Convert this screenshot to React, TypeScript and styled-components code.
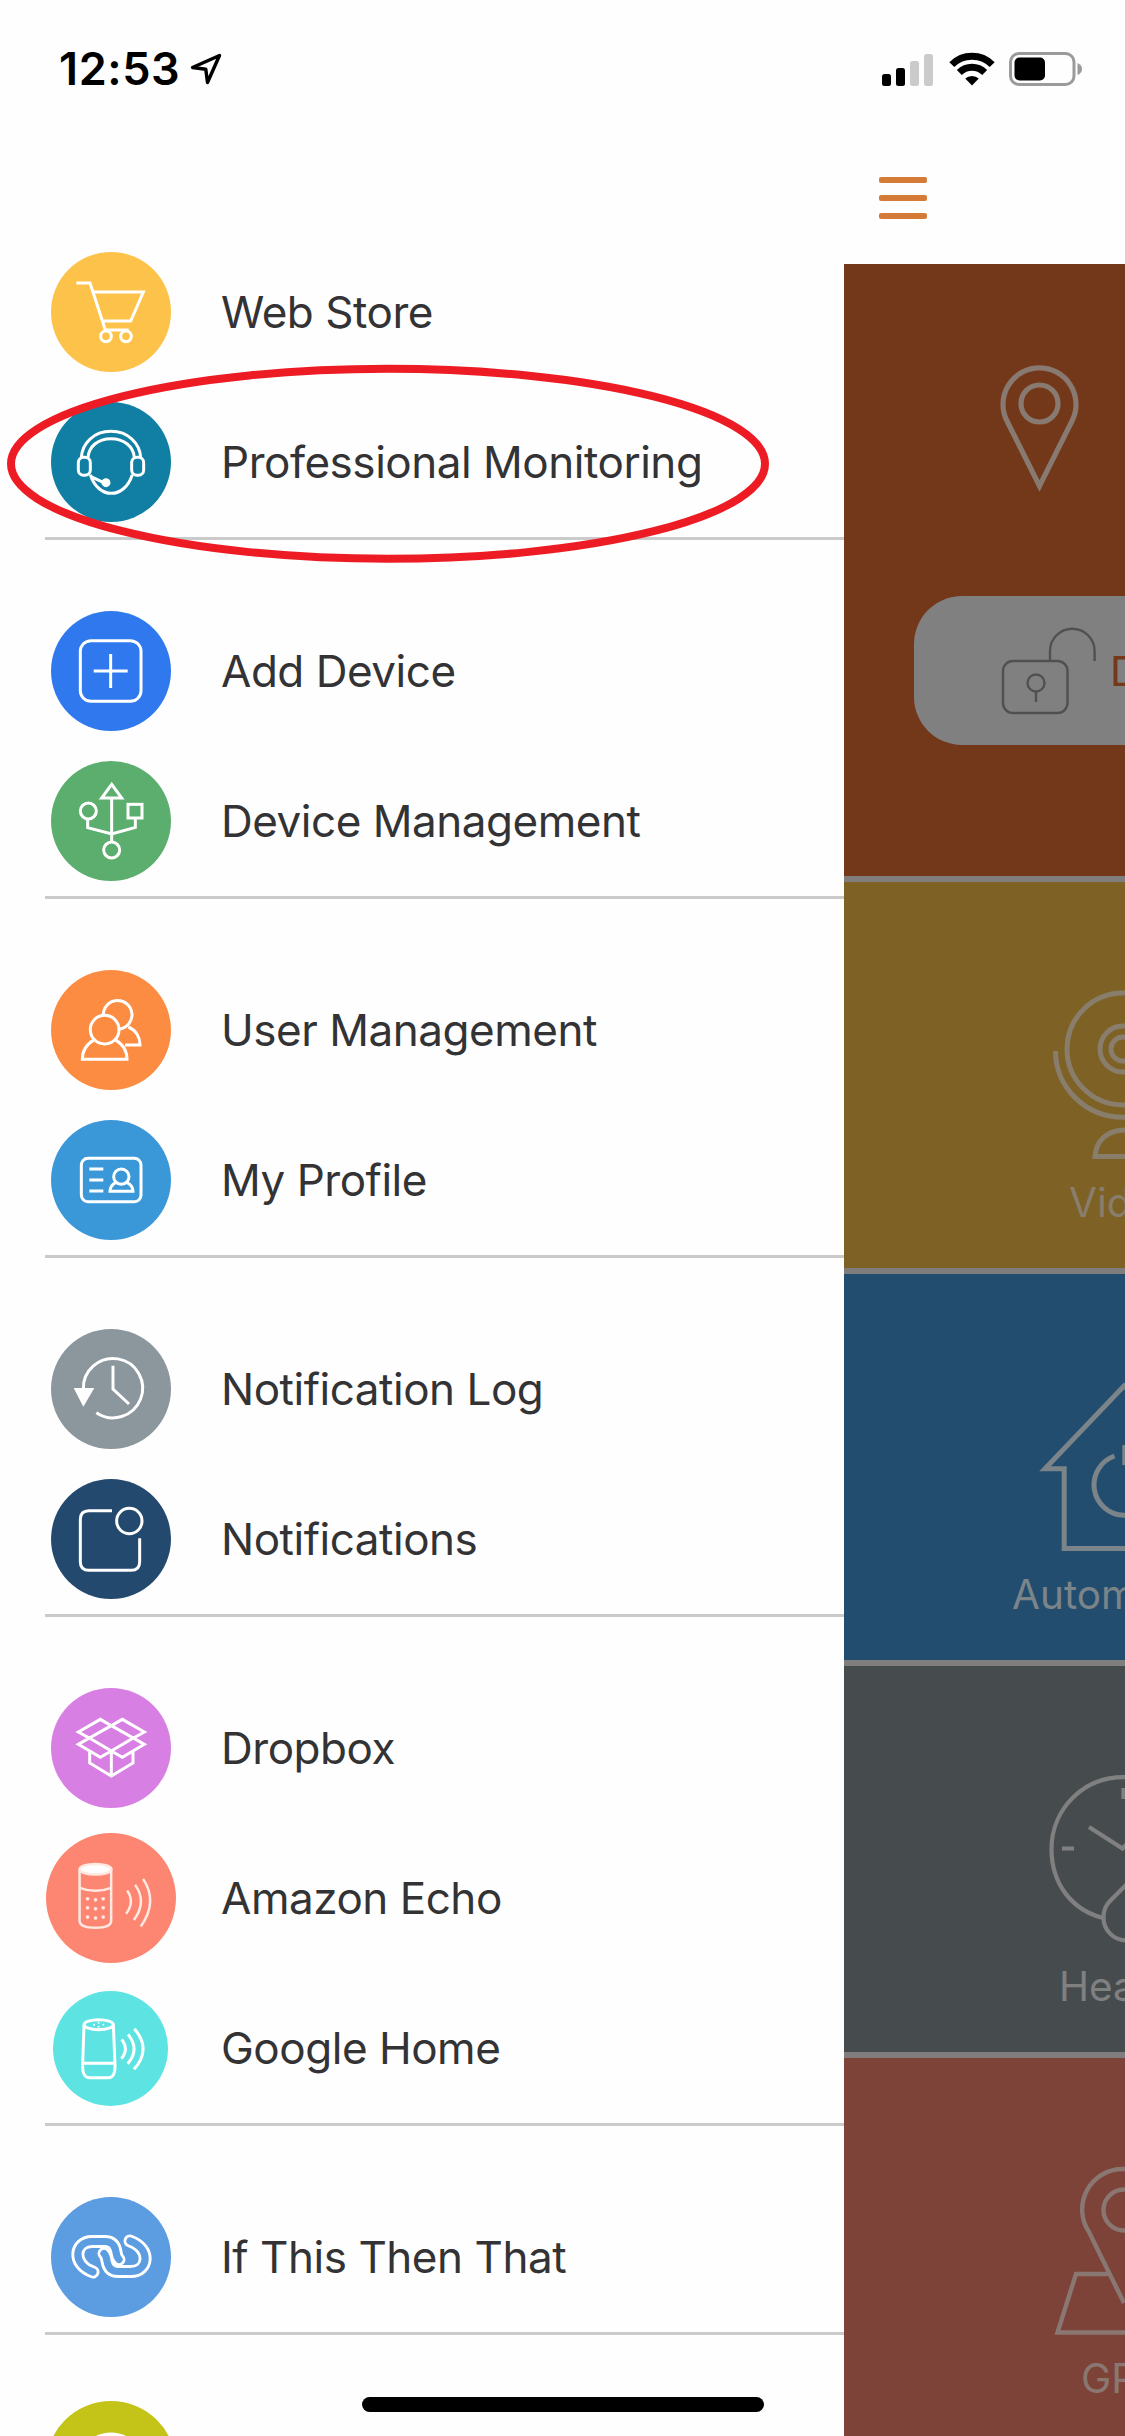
import React from "react";
import styled, { createGlobalStyle } from "styled-components";

const GlobalStyle = createGlobalStyle`
  html, body { margin: 0; padding: 0; background: #fff; }
  * { box-sizing: border-box; }
  svg { display: block; flex: none; }
`;

const Screen = styled.div`
  position: relative;
  width: 1125px;
  height: 2436px;
  overflow: hidden;
  display: flex;
  flex-direction: column;
  background: #fefefe;
  font-family: Inter, Roboto, "Liberation Sans", sans-serif;
`;

const StatusBar = styled.header`
  flex: none;
  height: 138px;
  padding: 0 43px 0 59px;
  display: flex;
  justify-content: space-between;
`;

const StatusGroup = styled.div<{ $gap: number }>`
  display: flex;
  align-items: center;
  height: 138px;
  gap: ${(p) => p.$gap}px;
`;

const Clock = styled.span`
  width: 121px;
  font-size: 45px;
  font-weight: 600;
  letter-spacing: 0.6px;
  line-height: 138px;
  white-space: nowrap;
  color: #000;
`;

const Body = styled.div`
  flex: 1;
  min-height: 0;
  display: flex;
`;

const Drawer = styled.nav`
  flex: none;
  width: 844px;
  padding: 99px 0 0 45px;
  display: flex;
  flex-direction: column;
  gap: 56px;
`;

const Group = styled.section`
  flex: none;
  border-bottom: 3px solid #cacaca;
`;

const Row = styled.div`
  height: 150px;
  display: flex;
  align-items: center;
`;

const IconSlot = styled.div`
  width: 131px;
  margin-right: 45px;
  display: flex;
  justify-content: center;
`;

const Disc = styled.div<{ $color: string; $size: number }>`
  flex: none;
  width: ${(p) => p.$size}px;
  height: ${(p) => p.$size}px;
  border-radius: 50%;
  background: ${(p) => p.$color};
  overflow: hidden;
`;

const Glyph = styled.svg`
  width: 100%;
  height: 100%;
  fill: none;
  stroke: #fff;
`;

const RowLabel = styled.span`
  font-size: 44px;
  letter-spacing: -0.47px;
  line-height: 60px;
  white-space: nowrap;
  color: #333335;
`;

const Content = styled.main`
  flex: none;
  width: 281px;
  display: flex;
  flex-direction: column;
`;

const TopBar = styled.div`
  flex: none;
  height: 126px;
  padding: 39px 0 0 35px;
`;

const Burger = styled.div`
  width: 48px;
  height: 42px;
  display: flex;
  flex-direction: column;
  justify-content: space-between;
`;

const BurgerLine = styled.span`
  height: 6px;
  border-radius: 2px;
  background: #d57b38;
`;

const Tiles = styled.div`
  flex: 1;
  display: flex;
  flex-direction: column;
  gap: 6px;
  background: #7f7e7d;
`;

const Tile = styled.div<{ $bg: string; $ink: string; $height: number }>`
  flex: none;
  height: ${(p) => p.$height}px;
  background: ${(p) => p.$bg};
  color: ${(p) => p.$ink};
  overflow: hidden;
`;

const TileArt = styled.svg`
  fill: none;
  stroke: currentColor;
`;

const TileLabel = styled.div<{ $indent: number }>`
  padding: 1px 0 0 ${(p) => p.$indent}px;
  font-size: 40.5px;
  line-height: 60px;
  white-space: nowrap;
`;

const ArmPill = styled.div`
  height: 149px;
  margin-left: 70px;
  border-radius: 48px 0 0 48px;
  background: #808080;
  display: flex;
  align-items: center;
  overflow: hidden;
`;

const ArmLabel = styled.span`
  font-size: 41px;
  color: #73391a;
`;

const Highlight = styled.svg`
  position: absolute;
  left: 0;
  top: 355px;
`;

const HomeIndicator = styled.div`
  position: absolute;
  left: 362px;
  top: 2397px;
  width: 402px;
  height: 15px;
  border-radius: 8px;
  background: #000;
`;

type Item = {
  label: string;
  color: string;
  size?: number;
  stroke?: number;
  box: string;
  art: React.ReactNode;
};

const groups: Item[][] = [
  [
    {
      label: "Web Store",
      color: "#fdc24a",
      box: "152 36 360 360",
      art: (
        <>
          <path d="M228 129H269L315 270H385M276 156H429L391 243H305" />
          <circle cx="317" cy="289" r="16" />
          <circle cx="377" cy="289" r="16" />
        </>
      ),
    },
    {
      label: "Professional Monitoring",
      color: "#117ea3",
      box: "152 486 360 360",
      art: (
        <>
          <path d="M243 652C246 610 280 574 332 574S418 610 421 652M263 652C266 620 292 596 332 596S399 620 402 652" />
          <rect x="234" y="652" width="36" height="54" rx="16" />
          <rect x="394" y="652" width="36" height="54" rx="16" />
          <path d="M270 704C282 740 306 760 333 760S384 740 396 704M272 710L310 728" />
          <circle cx="317" cy="728" r="9" fill="#fff" />
        </>
      ),
    },
  ],
  [
    {
      label: "Add Device",
      color: "#2f78ee",
      box: "151 63 360 360",
      art: (
        <>
          <rect x="239" y="152" width="182" height="182" rx="32" />
          <path d="M330 192V294M279 243H381" />
        </>
      ),
    },
    {
      label: "Device Management",
      color: "#5bae6e",
      box: "152 513 360 360",
      art: (
        <>
          <path d="M334 583L304 624H364ZM334 626V756M262 688V713L334 732L405 712V686" />
          <circle cx="264" cy="663" r="24" />
          <rect x="383" y="643" width="42" height="41" />
          <circle cx="334" cy="780" r="24" />
        </>
      ),
    },
  ],
  [
    {
      label: "User Management",
      color: "#fd8c43",
      box: "152 59 360 360",
      art: (
        <>
          <circle cx="313" cy="238" r="43" />
          <path d="M282 268C258 282 246 304 246 327H380C380 304 368 282 344 268" />
          <path d="M309 195A43 43 0 1 1 358 236M384 230C408 240 419 262 419 284H374" />
        </>
      ),
    },
    {
      label: "My Profile",
      color: "#3b98d8",
      box: "152 510 360 360",
      art: (
        <>
          <rect x="243" y="625" width="179" height="130" rx="20" />
          <path d="M267 657H309M267 690H309M267 723H309" />
          <circle cx="363" cy="680" r="23" />
          <path d="M347 697Q329 706 329 724H398Q398 706 379 697" />
        </>
      ),
    },
  ],
  [
    {
      label: "Notification Log",
      color: "#8b969d",
      box: "152 57 360 360",
      art: (
        <>
          <path d="M249 238A89 89 0 1 1 288 308M338 167V237L386 282" />
          <path d="M220 234H282L249 290Z" fill="#fff" stroke="none" />
        </>
      ),
    },
    {
      label: "Notifications",
      color: "#24496e",
      box: "152 506 360 360",
      art: (
        <>
          <path d="M335 601H266Q240 601 240 627V754Q240 780 266 780H392Q418 780 418 754V684" />
          <circle cx="387" cy="632" r="38" />
        </>
      ),
    },
  ],
  [
    {
      label: "Dropbox",
      color: "#d87fe3",
      box: "152 53 360 360",
      art: (
        <path d="M234 185L300 147L333 166L267 203ZM432 185L366 147L333 166L399 203ZM234 222L267 203L333 242L300 261ZM432 222L399 203L333 242L366 261ZM268 244V278L333 317L398 278V244M333 242V317" />
      ),
    },
    {
      label: "Amazon Echo",
      color: "#fd8672",
      size: 130,
      stroke: 7.5,
      box: "135 488 391 391",
      art: (
        <g stroke="#ffe9e2">
          <ellipse cx="284" cy="597" rx="48" ry="16" fill="#fff" />
          <path d="M236 597V752Q236 773 284 773Q331 773 331 752V597M236 653Q284 671 331 653" />
          <g fill="#ffe9e2" stroke="none">
            {[686, 713, 741].map((y) => (
              <g key={y}>
                <circle cx="260" cy={y} r="5.5" />
                <circle cx="284" cy={y + 3} r="5.5" />
                <circle cx="307" cy={y} r="5.5" />
              </g>
            ))}
          </g>
          <path d="M379 661Q403 695 376 731M403 644Q440 695 399 750M427 626Q473 695 420 769" />
        </g>
      ),
    },
    {
      label: "Google Home",
      color: "#5ce3e2",
      size: 115,
      box: "160 960 345 345",
      art: (
        <>
          <ellipse cx="297" cy="1061" rx="44" ry="15" />
          <path d="M253 1062L249 1180Q247 1220 270 1220H326Q348 1220 346 1180L341 1062M249 1177H346" />
          <g fill="#fff" stroke="none">
            <circle cx="283" cy="1061" r="3" />
            <circle cx="297" cy="1055" r="3" />
            <circle cx="297" cy="1067" r="3" />
            <circle cx="311" cy="1061" r="3" />
          </g>
          <path d="M366 1105Q389 1135 365 1163M385 1090Q422 1135 384 1178M404 1073Q457 1135 403 1195" />
        </>
      ),
    },
  ],
  [
    {
      label: "If This Then That",
      color: "#5c9ce0",
      box: "0 1 120 120",
      art: (
        <g strokeLinecap="round">
          {[
            "M42 76C20 68 24 45.500 41 45.500H54C61 45.500 64 50 65 56C65.500 60 66.500 62 68 63.500",
            "M79 45C101 53 97 75.500 80 75.500H67C60 75.500 57 71 56 65C55.500 61 54.500 59 53 57.500",
          ].map((d) => (
            <g key={d}>
              <path d={d} strokeWidth="13" />
              <path d={d} stroke="#5c9ce0" strokeWidth="7.2" />
            </g>
          ))}
        </g>
      ),
    },
  ],
  [
    {
      label: "",
      color: "#c4c317",
      size: 130,
      stroke: 5,
      box: "0 0 130 130",
      art: <circle cx="65" cy="66" r="32" />,
    },
  ],
];

const LocationArrow = () => (
  <svg width="32" height="32" viewBox="0 0 32 32" fill="none" stroke="#000" strokeWidth="3.4" strokeLinejoin="round">
    <path d="M29.500 2.500L17.500 29.500L15.800 16.200L2.500 14.500Z" />
  </svg>
);

const Signal = () => (
  <svg width="52" height="33" viewBox="0 0 52 33">
    <rect x="0" y="21" width="9" height="12" rx="2.5" />
    <rect x="14" y="15" width="9" height="18" rx="2.5" />
    <rect x="28" y="8" width="9" height="25" rx="2.5" fill="#cbcbcb" />
    <rect x="42" y="1" width="9" height="32" rx="2.5" fill="#cbcbcb" />
  </svg>
);

const Wifi = () => (
  <svg width="46" height="34" viewBox="0 0 46 34" fill="none" stroke="#000" strokeWidth="7">
    <path d="M2.8 12.6A28.5 28.5 0 0 1 43.2 12.6" />
    <path d="M10.3 20.6A18 18 0 0 1 35.7 20.6" />
    <path d="M23 33.5L16.2 26.6A10 10 0 0 1 29.8 26.6Z" fill="#000" stroke="none" />
  </svg>
);

const Battery = () => (
  <svg width="73" height="34" viewBox="0 0 73 34">
    <rect x="1.5" y="1.5" width="63.5" height="31" rx="8.5" fill="none" stroke="#9a9a9a" strokeWidth="3" />
    <rect x="5.5" y="5.5" width="30.5" height="23" rx="5" />
    <path d="M68.5 11Q73 13 73 17T68.5 23Z" fill="#9a9a9a" />
  </svg>
);

export default function App() {
  return (
    <>
      <GlobalStyle />
      <Screen>
        <StatusBar>
          <StatusGroup $gap={9.5}>
            <Clock>12:53</Clock>
            <LocationArrow />
          </StatusGroup>
          <StatusGroup $gap={14.5}>
            <Signal />
            <Wifi />
            <Battery />
          </StatusGroup>
        </StatusBar>
        <Body>
          <Drawer>
            {groups.map((items, i) => (
              <Group key={i}>
                {items.map((item) => (
                  <Row key={item.label}>
                    <IconSlot>
                      <Disc $color={item.color} $size={item.size ?? 120}>
                        <Glyph viewBox={item.box} strokeWidth={item.stroke ?? 9}>
                          {item.art}
                        </Glyph>
                      </Disc>
                    </IconSlot>
                    <RowLabel>{item.label}</RowLabel>
                  </Row>
                ))}
              </Group>
            ))}
          </Drawer>
          <Content>
            <TopBar>
              <Burger>
                <BurgerLine />
                <BurgerLine />
                <BurgerLine />
              </Burger>
            </TopBar>
            <Tiles>
              <Tile $bg="#733819" $ink="#887971" $height={612}>
                <TileArt width="281" height="332" viewBox="844 264 281 332" strokeWidth="5.2">
                  <path d="M1039.5 486L1007 421A36.500 36.500 0 1 1 1072 421Z" />
                  <circle cx="1039.5" cy="403.5" r="18.5" />
                </TileArt>
                <ArmPill>
                  <svg width="196" height="149" viewBox="914 596 196 149" fill="none" stroke="#505050" strokeWidth="2.4">
                    <rect x="1003" y="661" width="64.5" height="52" rx="10" />
                    <path d="M1050 661V651A22.300 22.300 0 0 1 1094.600 651V661" />
                    <circle cx="1036" cy="683" r="8.5" />
                    <path d="M1036 691.500V702" />
                  </svg>
                  <ArmLabel>D</ArmLabel>
                </ArmPill>
              </Tile>
              <Tile $bg="#7e6125" $ink="#897d6b" $height={386}>
                <TileArt width="281" height="290" viewBox="844 882 281 290" strokeWidth="5">
                  <circle cx="1123" cy="1049" r="56" />
                  <circle cx="1123" cy="1049" r="23" />
                  <circle cx="1123" cy="1049" r="12" />
                  <path d="M1055.500 1051A67.500 66.500 0 0 0 1123 1117.300H1125M1125 1156.500H1095C1096 1141 1107 1130 1125 1130" />
                </TileArt>
                <TileLabel $indent={225}>Vid</TileLabel>
              </Tile>
              <Tile $bg="#234d6e" $ink="#7b8489" $height={386}>
                <TileArt width="281" height="290" viewBox="844 1274 281 290" strokeWidth="5">
                  <path d="M1150 1410L1124 1386L1045 1468.800H1064.200V1548.500H1125" />
                  <path d="M1114.500 1456A30.500 30.500 0 0 0 1124 1515.300H1126M1124.800 1445V1465" />
                </TileArt>
                <TileLabel $indent={168}>Autom</TileLabel>
              </Tile>
              <Tile $bg="#464c4e" $ink="#808080" $height={386}>
                <TileArt width="281" height="290" viewBox="844 1666 281 290" strokeWidth="4.2">
                  <path d="M1130 1777.300C1084 1774 1051.500 1809 1051.500 1849C1051.500 1884 1072 1910 1103 1918" />
                  <path d="M1062 1848.500H1074M1123.500 1788V1799M1089 1827L1122.500 1848.500L1128 1843" />
                  <path d="M1127 1884L1110 1901C1105 1906 1103.500 1911 1103.500 1917A23 23 0 0 0 1126 1940.500" />
                </TileArt>
                <TileLabel $indent={215}>Hea</TileLabel>
              </Tile>
              <Tile $bg="#7d4338" $ink="#8a7772" $height={378}>
                <TileArt width="281" height="290" viewBox="844 2058 281 290" strokeWidth="4.4">
                  <path d="M1124 2303L1089 2232A40.500 40.500 0 0 1 1124 2169H1126" />
                  <circle cx="1124" cy="2210" r="20.5" />
                  <path d="M1110 2274H1076L1057.500 2332.500H1126" />
                </TileArt>
                <TileLabel $indent={237}>GP</TileLabel>
              </Tile>
            </Tiles>
          </Content>
        </Body>
        <Highlight width="780" height="220" viewBox="0 355 780 220" fill="none" stroke="#ed1c24" strokeWidth="8">
          <ellipse cx="388" cy="463.8" rx="377" ry="95" />
        </Highlight>
        <HomeIndicator />
      </Screen>
    </>
  );
}
